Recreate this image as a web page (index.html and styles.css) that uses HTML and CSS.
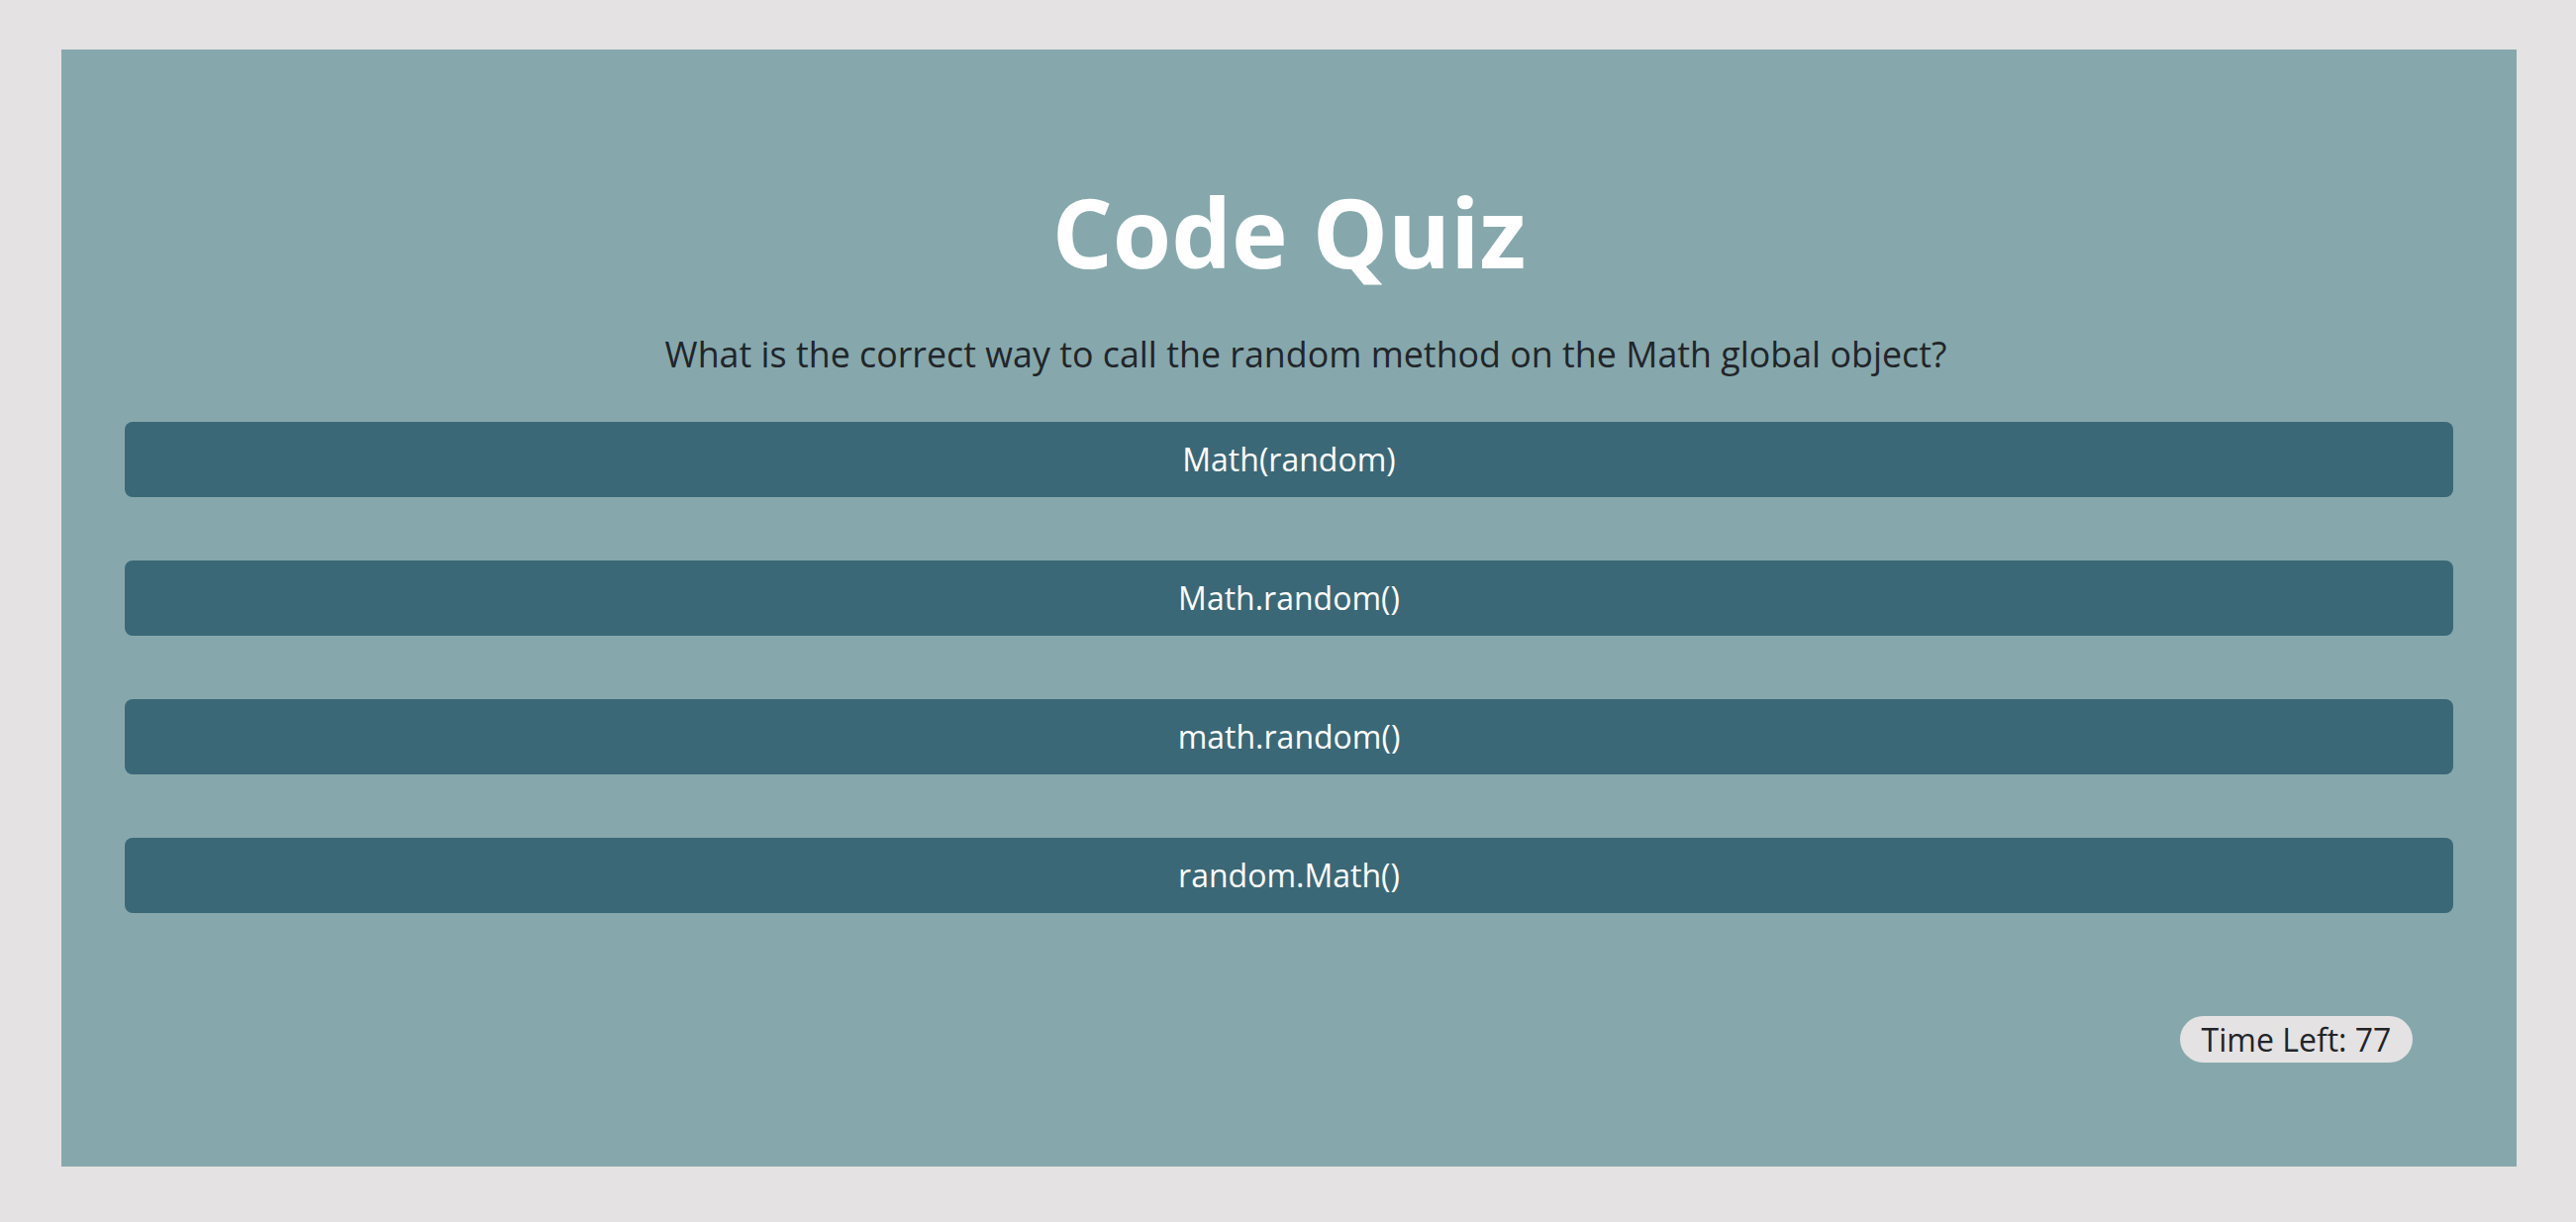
FILE: index.html
```html
<!DOCTYPE html>
<html lang="en">
<head>
<meta charset="utf-8">
<title>Code Quiz</title>
<link rel="stylesheet" href="styles.css">
</head>
<body>
<main class="card">
  <h1 class="title">Code Quiz</h1>
  <p class="question">What is the correct way to call the random method on the Math global object?</p>
  <div class="answers">
    <button class="answer">Math(random)</button>
    <button class="answer">Math.random()</button>
    <button class="answer">math.random()</button>
    <button class="answer">random.Math()</button>
  </div>
  <div class="footer">
    <span class="timer">Time Left: 77</span>
  </div>
</main>
</body>
</html>
```
FILE: styles.css
```css
html, body {
  margin: 0;
  padding: 0;
}
body {
  background: #e4e2e3;
  font-family: "Open Sans", "Noto Sans", sans-serif;
  padding: 50px 60px 56px 62px;
}
.card {
  width: 2480px;
  height: 1128px;
  box-sizing: border-box;
  background: #86a8ac;
  padding: 0 64px;
  display: flex;
  flex-direction: column;
}
.title {
  margin: 136px 0 0;
  font-size: 96px;
  line-height: 1;
  font-weight: 700;
  color: #ffffff;
  text-align: center;
}
.question {
  margin: 54px 0 0;
  padding-left: 34px;
  font-size: 35.8px;
  line-height: 1.2;
  color: #212529;
  text-align: center;
}
.answers {
  margin-top: 47px;
  display: flex;
  flex-direction: column;
  gap: 64px;
}
.answer {
  height: 76px;
  border: none;
  border-radius: 8px;
  background: #3a6877;
  color: #ffffff;
  font-family: "Open Sans", "Noto Sans", sans-serif;
  font-size: 32px;
  padding: 0;
}
.footer {
  display: flex;
  justify-content: flex-end;
  margin-top: 104px;
  padding-right: 41px;
}
.timer {
  height: 47px;
  width: 235px;
  box-sizing: border-box;
  border-radius: 24px;
  background: #e4e2e3;
  color: #212529;
  font-size: 32px;
  display: flex;
  align-items: center;
  justify-content: center;
}
```
